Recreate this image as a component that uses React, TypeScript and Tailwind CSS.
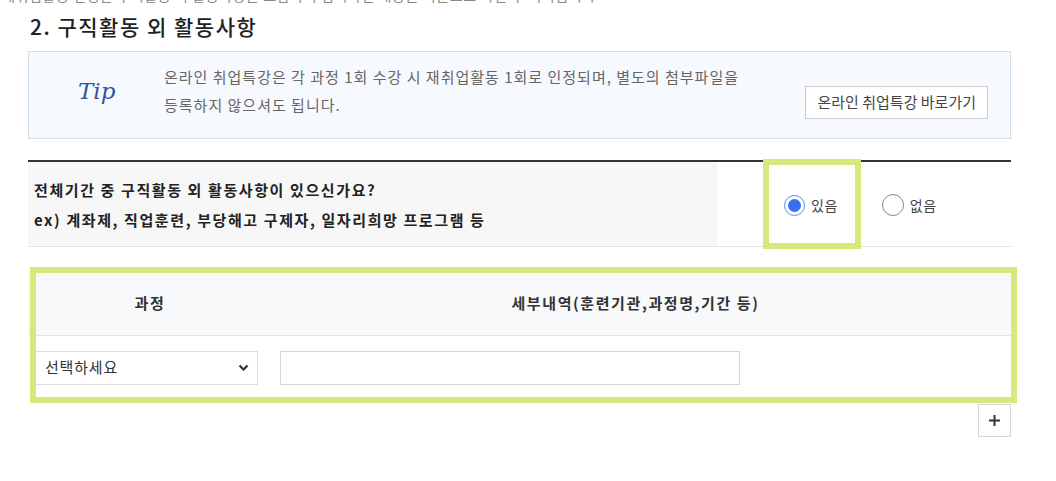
import { useState } from "react";

const font = { fontFamily: '"Noto Sans CJK KR", "Noto Sans", sans-serif' };

// radio drawn by hand so the ring/dot match the screenshot
function Radio({ checked, label, onClick }: { checked: boolean; label: string; onClick: () => void }) {
  return (
    <button type="button" onClick={onClick} className="flex items-center gap-[6px] text-[14px] tracking-[0.5px] text-[#444]">
      {checked ? (
        <span className="flex h-[21px] w-[21px] items-center justify-center rounded-full border-[1.5px] border-[#4f86f7] bg-white">
          <span className="h-[13px] w-[13px] rounded-full bg-[#3370f5]" />
        </span>
      ) : (
        <span className="h-[22px] w-[22px] rounded-full border border-[#8a8a8a] bg-white" />
      )}
      <span>{label}</span>
    </button>
  );
}

export default function App() {
  const [has, setHas] = useState(true);
  const [course, setCourse] = useState("");
  const [detail, setDetail] = useState("");

  return (
    <div className="min-h-[481px] w-[1056px] overflow-hidden bg-white" style={font}>
      {/* tail of the previous line, cut off by the screenshot */}
      <p className="-mt-[14px] h-[18px] whitespace-nowrap pl-[2px] text-[14px] leading-[18px] tracking-[0.6px] text-[#888]">
        재취업활동 인정은 구직활동 외 활동사항을 포함하여 입력하신 내용을 기준으로 확인 후 처리됩니다
      </p>

      <div className="ml-[28px] w-[983px]">
        <h2 className="mt-[9px] pl-[2px] text-[21px] font-medium leading-[26px] tracking-[1.5px] text-[#222]">2. 구직활동 외 활동사항</h2>

        {/* tip box */}
        <div className="mt-[12px] flex h-[88px] items-center border border-[#d3dfe9] bg-[#f6f9fd]">
          <div className="w-[135px] shrink-0 pb-[8px] pl-[49px] text-[23px] italic text-[#2f55a4]" style={{ fontFamily: '"DejaVu Serif", serif', fontWeight: 300 }}>
            Tip
          </div>
          <p className="mb-[8px] w-[620px] shrink-0 whitespace-nowrap text-[15px] leading-[28px] tracking-[1px] text-[#666]">
            온라인 취업특강은 각 과정 1회 수강 시 재취업활동 1회로 인정되며, 별도의 첨부파일을
            <br />
            등록하지 않으셔도 됩니다.
          </p>
          <div className="flex flex-1 justify-end pr-[22px] pt-[14px]">
            <button type="button" className="h-[33px] shrink-0 whitespace-nowrap border border-[#cccccc] bg-white px-[11px] text-[15px] text-[#444]">
              온라인 취업특강 바로가기
            </button>
          </div>
        </div>

        {/* question row */}
        <div className="relative mt-[21px] flex h-[87px] border-t-2 border-b border-t-[#333] border-b-[#e3e3e3]">
          <div className="flex w-[689px] flex-col justify-center bg-[#f7f7f7] pl-[6px] pt-[2px] text-[15px] font-semibold leading-[30px] tracking-[1.6px] text-[#222]">
            <p>전체기간 중 구직활동 외 활동사항이 있으신가요?</p>
            <p>ex) 계좌제, 직업훈련, 부당해고 구제자, 일자리희망 프로그램 등</p>
          </div>
          <div className="flex flex-1 items-center gap-[44px] pl-[67px] pt-[2px]">
            <Radio checked={has} label="있음" onClick={() => setHas(true)} />
            <Radio checked={!has} label="없음" onClick={() => setHas(false)} />
          </div>
          <div className="pointer-events-none absolute -top-[3px] left-[735px] h-[90px] w-[98px] border-[6px] border-[#d6ea7c]" />
        </div>

        {/* table */}
        <div className="relative mt-[24px]">
          <div className="grid grid-cols-[244px_1fr] border-b border-[#e5e5e5] bg-[#f8f9fb] text-[15px] font-semibold tracking-[1.6px] text-[#333]">
            <div className="flex h-[64px] items-center justify-center">과정</div>
            <div className="flex h-[64px] items-center justify-center pr-[12px]">세부내역(훈련기관,과정명,기간 등)</div>
          </div>
          <div className="flex h-[63px] items-center gap-[22px] pl-[2px]">
            <div className="relative">
              <select
                value={course}
                onChange={(e) => setCourse(e.target.value)}
                className="h-[34px] w-[228px] appearance-none border border-[#dcdcdc] bg-white pl-[14px] text-[15px] tracking-[0.8px] text-[#333] outline-none"
              >
                <option value="">선택하세요</option>
                <option value="a">계좌제</option>
                <option value="b">직업훈련</option>
                <option value="c">부당해고 구제자</option>
                <option value="d">일자리희망 프로그램</option>
              </select>
              <svg className="pointer-events-none absolute right-[9px] top-[13px]" width="11" height="8" viewBox="0 0 11 8">
                <path d="M1.5 1.5 L5.5 5.5 L9.5 1.5" fill="none" stroke="#333" strokeWidth="2.2" />
              </svg>
            </div>
            <input
              value={detail}
              onChange={(e) => setDetail(e.target.value)}
              className="h-[34px] w-[460px] border border-[#d6d6d6] bg-white px-[8px] text-[14px] outline-none"
            />
          </div>
          <div className="pointer-events-none absolute -bottom-[4px] -right-[6px] -top-[4px] left-[2px] border-[6px] border-[#d6ea7c]" />
        </div>

        <div className="mt-[5px] flex justify-end">
          <button type="button" className="flex h-[33px] w-[33px] items-center justify-center border border-[#d5d5d5] bg-white text-[#333]">
            <svg width="13" height="13" viewBox="0 0 13 13">
              <path d="M6.5 1 V12 M1 6.5 H12" stroke="#333" strokeWidth="2" />
            </svg>
          </button>
        </div>
      </div>
    </div>
  );
}
